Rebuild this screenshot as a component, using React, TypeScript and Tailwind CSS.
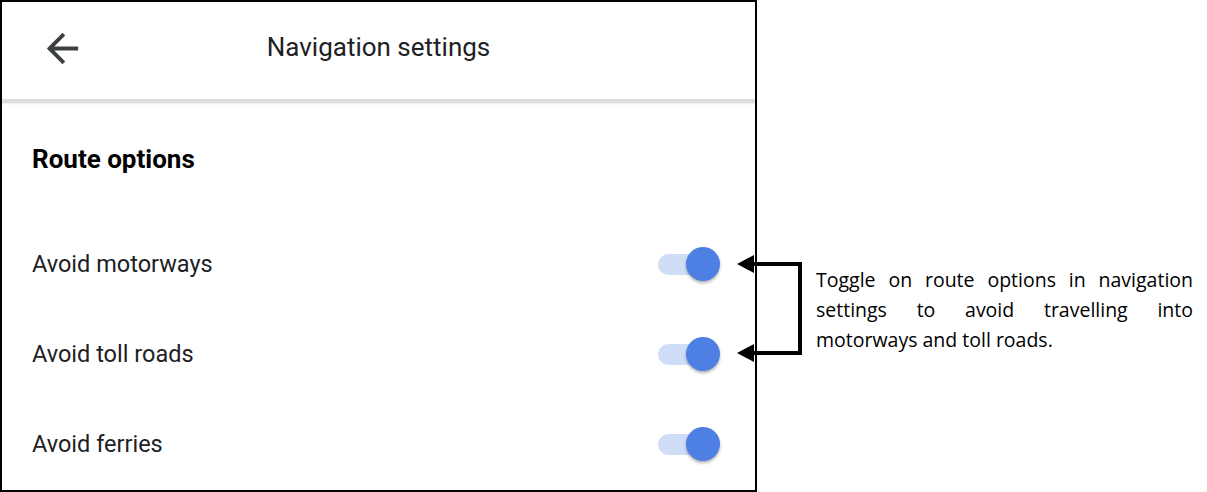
import React from 'react';

const rows = ['Avoid motorways', 'Avoid toll roads', 'Avoid ferries'];

const Toggle = () => (
  <div className="relative w-[62px] h-[36px] flex items-center">
    <div className="w-[57px] h-[21px] rounded-full bg-[#d0ddf7]" />
    <div className="absolute right-0 top-[1px] w-[34px] h-[34px] rounded-full bg-[#4e7fe3] shadow-[0_2px_3px_rgba(0,0,0,0.3)]" />
  </div>
);

const App = () => {
  return (
    <div className="relative w-[1207px] h-[492px] bg-white flex font-['Roboto',sans-serif]">
      {/* Phone screenshot */}
      <div className="w-[757px] h-[492px] border-2 border-black flex flex-col">
        <div className="h-[97px] flex items-center relative shrink-0">
          <svg className="absolute left-[37px] top-[23px]" width="47" height="47" viewBox="0 0 24 24">
            <path fill="#3c4043" d="M20 11H7.83l5.59-5.59L12 4l-8 8 8 8 1.41-1.41L7.83 13H20v-2z" />
          </svg>
          <div className="w-full text-center text-[26px] text-[#202124] pb-[6px]">Navigation settings</div>
        </div>
        <div className="h-[4px] bg-[#dedede] shadow-[0_1px_2px_rgba(0,0,0,0.08)] shrink-0" />
        <div className="pl-[30px] pr-[35px] flex flex-col">
          <div className="h-[116px] flex items-center text-[26px] font-bold text-[#000] pb-[3px]">Route options</div>
          {rows.map((r) => (
            <div key={r} className="h-[90px] flex items-center justify-between">
              <span className="text-[23.5px] text-[#202124] pt-[2px]">{r}</span>
              <Toggle />
            </div>
          ))}
        </div>
      </div>

      {/* Bracket arrows */}
      <svg className="absolute left-[734px] top-[250px]" width="72" height="116" viewBox="0 0 72 116">
        <path d="M18 14 H66 V103 H18" fill="none" stroke="#000" strokeWidth="4" />
        <polygon points="3,14 20,5 20,23" fill="#000" />
        <polygon points="3,103 20,94 20,112" fill="#000" />
      </svg>

      {/* Annotation */}
      <div className="ml-[59px] mt-[265px] w-[377px] text-[19.5px] leading-[30px] text-black text-justify font-['Open_Sans',sans-serif] [text-align-last:left]">
        Toggle on route options in navigation settings to avoid travelling into motorways and toll roads.
      </div>
    </div>
  );
};

export default App;
